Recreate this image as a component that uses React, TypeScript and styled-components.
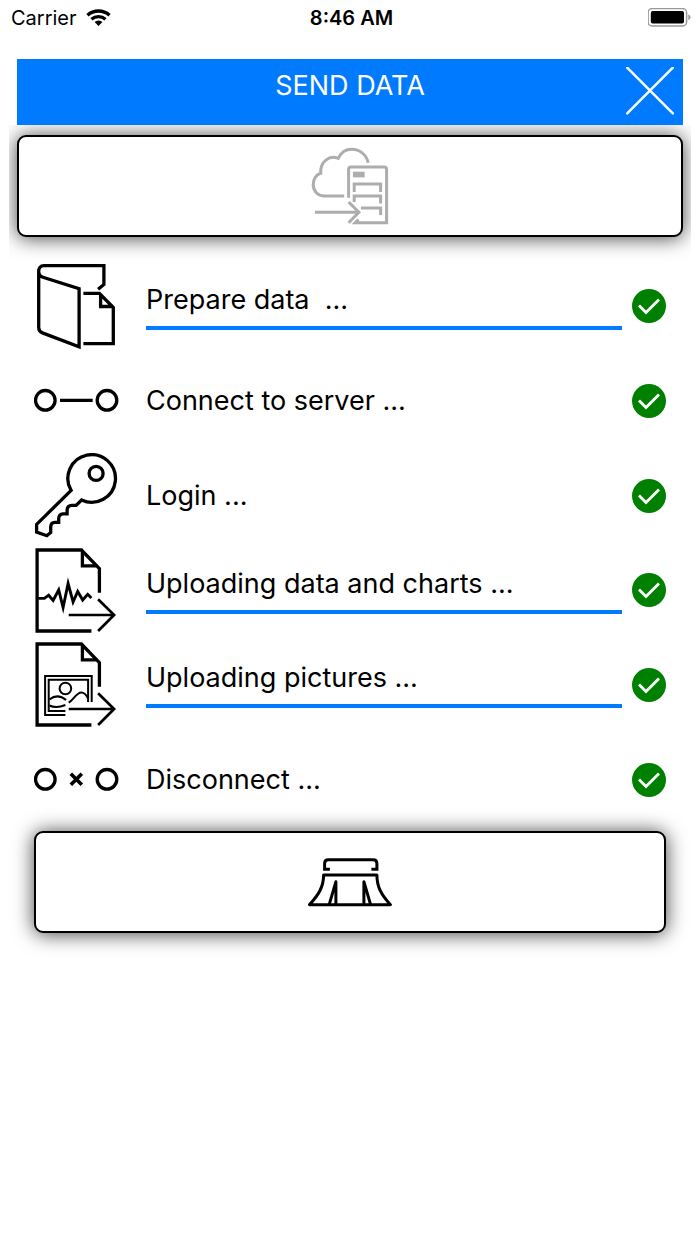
import React from "react";
import styled, { createGlobalStyle } from "styled-components";

const GlobalStyle = createGlobalStyle`
  * { box-sizing: border-box; }
  body {
    margin: 0;
    background: #fff;
    color: #000;
    font-family: Inter, "Liberation Sans", sans-serif;
  }
`;

const StatusBar = styled.div`
  display: grid;
  grid-template-columns: 1fr auto 1fr;
  align-items: center;
  height: 35px;
  padding: 0 8px 0 11px;
  font-size: 20px;
  line-height: 24px;
`;

const Carrier = styled.span`
  display: flex;
  align-items: center;
  gap: 9px;
`;

const Clock = styled.time`
  font-weight: 600;
`;

const BatteryIcon = styled.svg`
  justify-self: end;
`;

const Screen = styled.main`
  display: flex;
  flex-direction: column;
  gap: 10px;
  padding: 24px 17px;
`;

const Header = styled.header`
  display: grid;
  grid-template-columns: 48px 1fr 48px;
  align-items: start;
  height: 66px;
  padding: 8px 9px;
  background: #007aff;
  color: #fff;
`;

const Title = styled.h1`
  grid-column: 2;
  margin: 0;
  font-size: 27px;
  font-weight: 400;
  line-height: 38px;
  text-align: center;
`;

const CloseButton = styled.button`
  width: 48px;
  height: 48px;
  padding: 0;
  border: 0;
  background: none;
  color: inherit;
  cursor: pointer;
`;

const ActionButton = styled.button<{ $clipped?: boolean }>`
  display: flex;
  align-items: center;
  justify-content: center;
  width: 100%;
  height: 102px;
  padding: 0;
  border: 2px solid #000;
  border-radius: 9px;
  background: #fff;
  color: #000;
  box-shadow: 0 1px 20px rgba(0, 0, 0, 0.75);
  clip-path: ${(p) => (p.$clipped ? "inset(-10px -8px -24px)" : "none")};
  cursor: pointer;

  &:disabled {
    color: #adadad;
    cursor: default;
  }
`;

const Body = styled.section`
  display: flex;
  flex-direction: column;
  gap: 4px;
  padding: 12px 17px;
`;

const Steps = styled.ol`
  display: grid;
  grid-auto-rows: 1fr;
  min-height: 568px;
  margin: 0;
  padding: 0;
  list-style: none;
`;

const Step = styled.li`
  display: grid;
  grid-template-columns: 85px 1fr 34px;
  align-items: center;
`;

const StepText = styled.div`
  display: flex;
  flex-direction: column;
  gap: 9px;
  padding: 0 10px 0 27px;
`;

const StepLabel = styled.label`
  font-size: 27px;
  line-height: 34px;
  white-space: pre-wrap;
`;

const StepProgress = styled.progress`
  display: block;
  width: 100%;
  height: 4px;
  border: 0;
  appearance: none;
  background: #b7b7b7;

  &::-webkit-progress-bar { background: #b7b7b7; }
  &::-webkit-progress-value { background: #007aff; }
  &::-moz-progress-bar { background: #007aff; }
`;

const Glyph = styled.svg`
  display: block;
  fill: none;
  stroke: currentColor;
`;

type IconProps = { children: React.ReactNode; width?: number; viewBox?: string };

function Icon({ children, width = 3.3, viewBox = "0.6 0.5 85 85" }: IconProps) {
  return (
    <Glyph width="85" height="85" viewBox={viewBox} strokeWidth={width} aria-hidden="true">
      {children}
    </Glyph>
  );
}

const CloudServerIcon = () => (
  <Icon width={3}>
    <path d="M60.8 19.2C59 11 52 5.8 44.3 5.8C38.5 5.8 33.5 9 30.8 14.8C22 11.5 12.5 18 13.3 29.8C8.500 31 5.800 36 5.800 41C5.800 47.500 10.500 52.500 17 52.500H36.800" />
    <path d="M41.200 54.200V26Q41.200 23.500 43.700 23.500H76.700Q79.200 23.500 79.200 26V79.200H47.800L51 76" />
    <path d="M45.500 28.200H57.200V33.900H45.500Z" fill="currentColor" stroke="none" />
    <path d="M46.800 48.500V40.500H73.200V48.500M46.800 58.500V52.600H73.200V60M53.500 64.500H73.200V71.500" />
    <path d="M7.500 68.800H51.200M41.200 58.500L51.500 68.800L41.200 79.200" />
  </Icon>
);

const BookIcon = () => (
  <Icon>
    <path d="M64.700 25.700L70.500 21V2.200H10.500C7 2.200 5.300 4.500 5.300 8C5.300 11 7 13 9.500 13.800L45.700 25.300V83.300L9 69.400Q5.300 68 5.300 64V8" />
    <path d="M50 29.900H66L79.900 44V80.200H50M67.200 30V43H79" />
  </Icon>
);

const ConnectIcon = () => (
  <Icon viewBox="0 0 85 85">
    <circle cx="11.300" cy="42.300" r="9.800" />
    <circle cx="73" cy="42.300" r="9.800" />
    <path d="M26 42.300H58.700" />
  </Icon>
);

const KeyIcon = () => (
  <Icon>
    <path d="M37.700 37.900L3.200 71.900V79.500L13.400 83.200L17.300 79.900V74.500Q17.500 70 21.500 69.900H25.300V66Q25.500 61.600 29.500 61.300H33.700V57.500Q34 53 38.500 52.900H42.700L48.200 47.500A23.800 23.800 0 1 0 37.700 37.900Z" />
    <circle cx="62.700" cy="20.900" r="7" />
  </Icon>
);

const DocumentOutline = () => (
  <>
    <path d="M58 83.500H3.700V2.500H48L66 21.200V45.200M49 3V18.300H64.500" />
    <path d="M35.300 67.500H80.500M64.700 51.800L80.700 67.500L64.700 83.500" strokeWidth="2.700" />
  </>
);

const ChartUploadIcon = () => (
  <Icon>
    <DocumentOutline />
    <path
      d="M5 50.900H11L15.300 47.700L19.700 52.900L25.300 42.500L29.700 60L34.700 36L39.700 54.500L44.300 44L49.300 52.500L54.300 46.800L58 50.500"
      strokeWidth="2.900"
      strokeMiterlimit="10"
    />
  </Icon>
);

const PictureUploadIcon = () => (
  <Icon>
    <DocumentOutline />
    <g strokeWidth="2">
      <path d="M58.300 60.500V34.500H11.700V73.500H32M54.700 60.500V38.200H15.300V69.500H32" />
      <circle cx="32" cy="47" r="5.800" />
      <path d="M16 58C21 54 26 53 32.700 58.500M35.300 61.200C40 58.500 43 51 48 51C51 51 53 53.500 54.700 57M16 64C21 66.500 26 66 32 63.500" />
    </g>
  </Icon>
);

const DisconnectIcon = () => (
  <Icon viewBox="0 0 85 85">
    <circle cx="11.300" cy="42.300" r="9.800" />
    <circle cx="73" cy="42.300" r="9.800" />
    <path d="M36.800 36.800L47.800 47.800M47.800 36.800L36.800 47.800" strokeWidth="3.600" />
  </Icon>
);

const BrushIcon = () => (
  <Icon width={3} viewBox="0.600 0 85 85">
    <path d="M22.500 29.300H17.200V23.500Q17.200 19.700 21 19.700H65.700Q69.500 19.700 69.500 23.500V29.300H64" />
    <path
      d="M16.200 35H69.500C69.500 47 74 55 83 64.700H2C11 55 16.200 47 16.200 35ZM21.800 64.700L28.500 41.700V64.700M56.500 64.700V41.700L63.200 64.700"
      strokeLinejoin="round"
    />
  </Icon>
);

const DoneBadge = () => (
  <svg width="34" height="34" viewBox="0 0 34 34" role="img" aria-label="Done">
    <circle cx="17" cy="17" r="17" fill="#008000" />
    <path d="M7 16.500L14 23.500L27 10.500" fill="none" stroke="#fff" strokeWidth="2.800" />
  </svg>
);

const steps = [
  { id: "prepare", label: "Prepare data  ...", Picture: BookIcon, progress: 100 },
  { id: "connect", label: "Connect to server ...", Picture: ConnectIcon },
  { id: "login", label: "Login ...", Picture: KeyIcon },
  { id: "charts", label: "Uploading data and charts ...", Picture: ChartUploadIcon, progress: 100 },
  { id: "pictures", label: "Uploading pictures ...", Picture: PictureUploadIcon, progress: 100 },
  { id: "disconnect", label: "Disconnect ...", Picture: DisconnectIcon },
];

export default function App() {
  return (
    <>
      <GlobalStyle />
      <StatusBar>
        <Carrier>
          Carrier
          <svg width="25" height="18" viewBox="0 0 25 18" aria-hidden="true">
            <g fill="none" stroke="#000" strokeWidth="3.400">
              <path d="M1.500 6.200A16.500 16.500 0 0 1 23.500 6.200" />
              <path d="M5.500 10.300A10.600 10.600 0 0 1 19.500 10.300" />
            </g>
            <path d="M12.500 17L8.600 13.100A5.600 5.600 0 0 1 16.400 13.100Z" />
          </svg>
        </Carrier>
        <Clock dateTime="08:46">8:46 AM</Clock>
        <BatteryIcon width="44" height="20" viewBox="0.700 0.700 44 20" role="img" aria-label="Battery full">
          <rect x="0.800" y="1.300" width="38.500" height="17.400" rx="4" fill="none" stroke="#999" strokeWidth="1.500" />
          <rect x="3.500" y="3.800" width="33.200" height="12.400" rx="2" />
          <path d="M41 7Q43.200 8 43.200 10T41 13Z" fill="#999" />
        </BatteryIcon>
      </StatusBar>
      <Screen>
        <Header>
          <Title>SEND DATA</Title>
          <CloseButton type="button" aria-label="Close">
            <Glyph width="48" height="48" viewBox="0 0.500 48 48" strokeWidth="2.500" strokeLinecap="round">
              <path d="M1.200 1.200L46.800 46.800M46.800 1.200L1.200 46.800" />
            </Glyph>
          </CloseButton>
        </Header>
        <ActionButton type="button" aria-label="Send data" $clipped disabled>
          <CloudServerIcon />
        </ActionButton>
        <Body>
          <Steps>
            {steps.map(({ id, label, Picture, progress }) => (
              <Step key={id}>
                <Picture />
                <StepText>
                  <StepLabel as={progress === undefined ? "span" : "label"} htmlFor={progress === undefined ? undefined : id}>
                    {label}
                  </StepLabel>
                  {progress !== undefined && <StepProgress id={id} value={progress} max={100} />}
                </StepText>
                <DoneBadge />
              </Step>
            ))}
          </Steps>
          <ActionButton type="button" aria-label="Clean up">
            <BrushIcon />
          </ActionButton>
        </Body>
      </Screen>
    </>
  );
}
